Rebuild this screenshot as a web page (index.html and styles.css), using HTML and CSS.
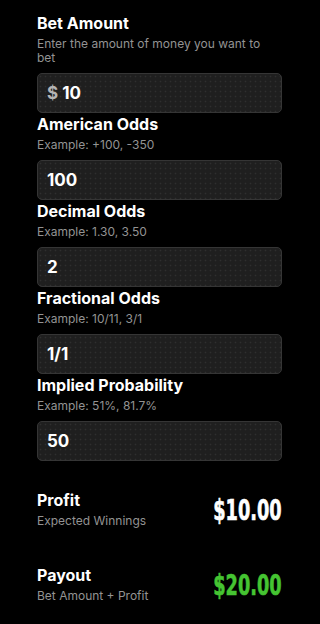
FILE: index.html
```html
<!DOCTYPE html>
<html lang="en">
<head>
<meta charset="utf-8">
<title>Odds Calculator</title>
<link rel="stylesheet" href="styles.css">
</head>
<body>
<main class="page">
  <section class="field">
    <h2 class="title">Bet Amount</h2>
    <p class="hint hint-wrap">Enter the amount of money you want to bet</p>
    <div class="input"><span class="prefix">$</span><span class="value">10</span></div>
  </section>
  <section class="field">
    <h2 class="title">American Odds</h2>
    <p class="hint">Example: +100, -350</p>
    <div class="input"><span class="value">100</span></div>
  </section>
  <section class="field">
    <h2 class="title">Decimal Odds</h2>
    <p class="hint">Example: 1.30, 3.50</p>
    <div class="input"><span class="value">2</span></div>
  </section>
  <section class="field">
    <h2 class="title">Fractional Odds</h2>
    <p class="hint">Example: 10/11, 3/1</p>
    <div class="input"><span class="value">1/1</span></div>
  </section>
  <section class="field">
    <h2 class="title">Implied Probability</h2>
    <p class="hint">Example: 51%, 81.7%</p>
    <div class="input"><span class="value">50</span></div>
  </section>

  <section class="results">
    <div class="result">
      <div class="result-text">
        <h3 class="title">Profit</h3>
        <p class="hint">Expected Winnings</p>
      </div>
      <div class="amount">$10.00</div>
    </div>
    <div class="result">
      <div class="result-text">
        <h3 class="title">Payout</h3>
        <p class="hint">Bet Amount + Profit</p>
      </div>
      <div class="amount green">$20.00</div>
    </div>
  </section>
</main>
</body>
</html>
```

FILE: styles.css
```css
* { box-sizing: border-box; }
html, body {
  margin: 0;
  background: #000;
}
body {
  font-family: Inter, "Noto Sans", sans-serif;
  color: #fff;
}
.page {
  padding: 12px 38px 0 37px;
}
.field {
  display: flex;
  flex-direction: column;
}
.title {
  margin: 0;
  font-size: 16px;
  line-height: 22px;
  font-weight: 700;
  color: #fff;
}
.hint {
  margin: 3px 0 0;
  font-size: 12px;
  line-height: 14px;
  color: #939393;
}
.hint-wrap {
  max-width: 236px;
}
.input {
  margin-top: 8px;
  height: 40px;
  border: 1px solid #353535;
  border-radius: 5px;
  background-color: #1f1f1f;
  background-image: radial-gradient(circle, rgba(255,255,255,0.07) 0.7px, transparent 1.1px);
  background-size: 5px 5px;
  display: flex;
  align-items: center;
  gap: 4px;
  padding: 0 9px;
  font-size: 17px;
  font-weight: 700;
}
.prefix {
  color: #b4b4b4;
}
.value {
  color: #fff;
}
.results {
  margin-top: 28px;
  display: flex;
  flex-direction: column;
  gap: 36px;
}
.result {
  display: flex;
  justify-content: space-between;
  align-items: center;
}
.amount {
  font-family: "DejaVu Sans Condensed", "DejaVu Sans", sans-serif;
  font-weight: 700;
  font-size: 29px;
  line-height: 30px;
  color: #fff;
  -webkit-text-stroke: 0.6px currentColor;
  transform: scaleX(0.68);
  transform-origin: right center;
  margin-top: 3px;
}
.amount.green {
  color: #45c432;
}
```
